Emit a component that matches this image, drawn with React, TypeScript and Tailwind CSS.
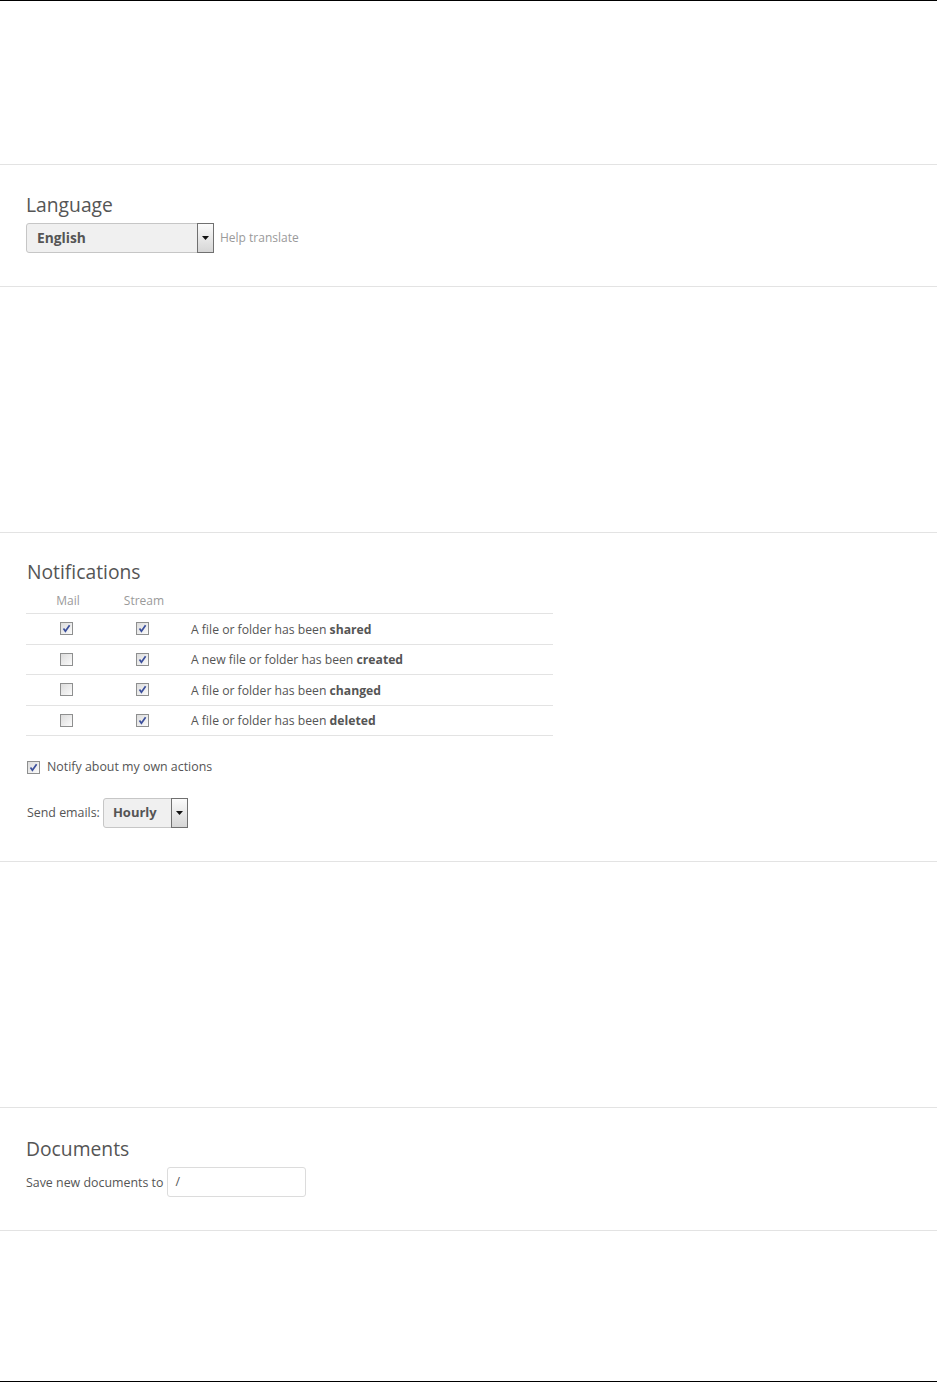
import React from "react";

const Check = ({ checked }: { checked: boolean }) => (
  <span className="inline-flex h-[13px] w-[13px] items-center justify-center border border-[#8e8f8f] bg-gradient-to-br from-[#dcdcdc] to-[#fbfbfb]">
    {checked && (
      <svg width="9" height="9" viewBox="0 0 9 9">
        <path
          d="M1.5 4.6 L3.4 7.2 L7.6 1.2"
          fill="none"
          stroke="#3b4f9c"
          strokeWidth="1.7"
        />
      </svg>
    )}
  </span>
);

const Arrow = () => (
  <span className="flex h-[30px] w-[17px] items-center justify-center border border-[#707070] bg-gradient-to-b from-[#fbfbfb] to-[#d6d6d6]">
    <svg width="7" height="4" viewBox="0 0 7 4">
      <path d="M0 0 H7 L3.5 4 Z" fill="#111" />
    </svg>
  </span>
);

const Select = ({ label, width, textClass }: { label: string; width: string; textClass: string }) => (
  <div className={`flex h-[30px] items-stretch rounded-[3px] border border-[#c6c6c6] bg-[#f0f0f0] ${width}`}>
    <span className={`flex flex-1 items-center font-bold text-[#555] ${textClass}`}>{label}</span>
    <span className="-my-px -mr-px">
      <Arrow />
    </span>
  </div>
);

const rows = [
  { mail: true, prefix: "A file or folder has been ", verb: "shared" },
  { mail: false, prefix: "A new file or folder has been ", verb: "created" },
  { mail: false, prefix: "A file or folder has been ", verb: "changed" },
  { mail: false, prefix: "A file or folder has been ", verb: "deleted" },
];

export default function App() {
  return (
    <div className="box-border h-[1382px] border-y border-black bg-white font-['Open_Sans',sans-serif] text-[12.4px] text-[#555]">
      <div className="box-border h-[164px] border-b border-[#e3e3e3]" />

      <div className="box-border h-[122px] border-b border-[#e3e3e3] px-[26px] pt-[28px]">
        <h2 className="mb-[6px] text-[19.3px] leading-[24px] text-[#555]">Language</h2>
        <div className="flex items-center">
          <Select label="English" width="w-[188px]" textClass="pl-[10px] text-[13.8px]" />
          <span className="ml-[6px] text-[12px] text-[#9a9a9a]">Help translate</span>
        </div>
      </div>

      <div className="box-border h-[246px] border-b border-[#e3e3e3]" />

      <div className="box-border h-[329px] border-b border-[#e3e3e3] px-[27px] pt-[27px]">
        <h2 className="mb-[4px] text-[19.3px] leading-[24px] text-[#555]">Notifications</h2>
        <div className="-ml-px w-[527px] text-[12.2px]">
          <div className="box-border flex h-[26px] items-center border-b border-[#e3e3e3] text-[12px] text-[#9a9a9a]">
            <span className="w-[84px] text-center">Mail</span>
            <span className="w-[68px] text-center">Stream</span>
          </div>
          {rows.map((r, i) => (
            <div
              key={i}
              className="box-border flex h-[30.5px] items-center border-b border-[#e3e3e3]"
            >
              <span className="flex w-[80px] justify-center">
                <Check checked={r.mail} />
              </span>
              <span className="flex w-[72px] justify-center">
                <Check checked />
              </span>
              <span className="pt-[2px] pl-[13px]">
                {r.prefix}
                <strong className="font-bold">{r.verb}</strong>
              </span>
            </div>
          ))}
        </div>

        <div className="mt-[21px] flex h-[20px] items-center">
          <Check checked />
          <span className="ml-[7px]">Notify about my own actions</span>
        </div>

        <div className="mt-[21px] flex items-center">
          <span className="mr-[3px]">Send emails:</span>
          <Select label="Hourly" width="w-[85px]" textClass="pl-[9px] text-[13px]" />
        </div>
      </div>

      <div className="box-border h-[246px] border-b border-[#e3e3e3]" />

      <div className="box-border h-[123px] border-b border-[#e3e3e3] px-[26px] pt-[29px]">
        <h2 className="mb-[6px] text-[19.3px] leading-[24px] text-[#555]">Documents</h2>
        <div className="flex items-center">
          <span className="mr-[4px] pt-[2px]">Save new documents to</span>
          <div className="flex h-[30px] w-[139px] items-center rounded-[3px] border border-[#dcdcdc] bg-white pl-[7px]">
            /
          </div>
        </div>
      </div>
    </div>
  );
}
